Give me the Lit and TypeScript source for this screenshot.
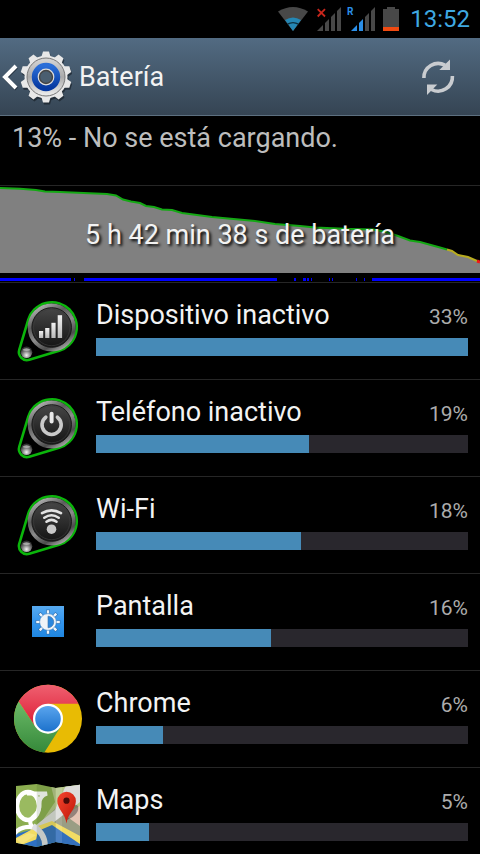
import { LitElement, html, css, svg, SVGTemplateResult } from "lit";
import { customElement, property } from "lit/decorators.js";

/** Shared metal knob with a green cable loop around it. */
const knob = (glyph: SVGTemplateResult) => svg`
  <defs>
    <linearGradient id="rim" x1="0.2" y1="0" x2="0.8" y2="1">
      <stop offset="0" stop-color="#b4b4b4"/><stop offset=".3" stop-color="#5c5c5c"/>
      <stop offset=".55" stop-color="#8c8c8c"/><stop offset=".8" stop-color="#4c4c4c"/>
      <stop offset="1" stop-color="#b0b0b0"/>
    </linearGradient>
    <linearGradient id="face" x1="0" y1="0" x2="0" y2="1">
      <stop offset="0" stop-color="#474747"/><stop offset="1" stop-color="#141414"/>
    </linearGradient>
    <radialGradient id="ball" cx=".5" cy=".75" r=".6">
      <stop offset="0" stop-color="#f4f4f4"/><stop offset=".45" stop-color="#999"/>
      <stop offset="1" stop-color="#333"/>
    </radialGradient>
    <linearGradient id="glyph" x1="0" y1="0" x2="0" y2="1">
      <stop offset="0" stop-color="#f2f2f2"/><stop offset="1" stop-color="#b8b8b8"/>
    </linearGradient>
  </defs>
  <path d="M28.2 36.9A24.8 24.8 0 1 1 59.1 67.8L29.3 76.7A8 8 0 0 1 19.3 66.7Z" fill="#000" stroke="#0bb50b" stroke-width="2.6"/>
  <circle cx="51.7" cy="44.5" r="21.800" fill="none" stroke="url(#rim)" stroke-width="4.4"/>
  <circle cx="51.7" cy="44.5" r="19.8" fill="url(#face)" stroke="#1c1c1c"/>
  <circle cx="51.7" cy="44.5" r="18.2" fill="none" stroke="#3c3c3c" stroke-width=".7"/>
  <circle cx="26.5" cy="69.3" r="5.8" fill="url(#ball)"/>
  <path d="M22.3 67a5 4 0 0 1 8.4 0q-4.200 2-8.400 0z" fill="#c8c8c8" opacity=".7"/>
  ${glyph}`;

const icons: Record<string, SVGTemplateResult> = {
  signal: knob(svg`<g fill="url(#glyph)">
    <rect x="39" y="48" width="4.200" height="7"/><rect x="45.200" y="45" width="4.200" height="10"/>
    <rect x="51.400" y="39.800" width="4.200" height="15.200"/><rect x="57.700" y="32.200" width="4.400" height="22.800"/></g>`),
  power: knob(svg`<g fill="none" stroke-linecap="round">
    <path d="M45.800 37.200A9.600 9.600 0 1 0 57.400 37.200" stroke="#c9c9c9" stroke-width="3.600"/>
    <path d="M51.600 33.700V41.500" stroke="#e9e9e9" stroke-width="4"/></g>`),
  wifi: knob(svg`<g fill="none" stroke="#e2e2e2" stroke-width="2.600" stroke-linecap="round">
    <path d="M42 36.200Q51.500 30.500 61 36.200"/><path d="M44.300 40.700Q51.500 35.800 58.700 40.700"/>
    <path d="M46.500 44.700Q51.500 41 56.500 44.700"/></g>
    <circle cx="51.500" cy="52.200" r="4.800" fill="#c8c8c8"/>`),
  display: svg`
    <defs><linearGradient id="tile" x1="0" y1="0" x2="0" y2="1">
      <stop offset="0" stop-color="#57aaf0"/><stop offset=".5" stop-color="#3596ee"/><stop offset="1" stop-color="#1f86e0"/>
    </linearGradient></defs>
    <rect x="32" y="32" width="32" height="31" fill="url(#tile)"/>
    <g stroke-linecap="square">
      ${[["#2a6cae", 3.6], ["#eef4fa", 2.4]].map(([c, w]) => svg`<g stroke=${c} stroke-width=${w}>
        ${[0, 45, 90, 135, 180, 225, 270, 315].map((a) => svg`<path d="M48 40V37.400" transform="rotate(${a} 48 48)"/>`)}
      </g>`)}
    </g>
    <circle cx="48" cy="48" r="8.400" fill="#f0f4f8" stroke="#2f7cc6" stroke-width=".6"/>
    <path d="M48 42.200a5.800 5.800 0 0 1 0 11.600z" fill="#2b86dc" stroke="#3b6ea4" stroke-width=".6"/>`,
  chrome: svg`
    <defs>
      <linearGradient id="red" x1="0" y1="0" x2="0" y2="1"><stop offset="0" stop-color="#ef6070"/><stop offset="1" stop-color="#dd1c35"/></linearGradient>
      <linearGradient id="green" x1="0" y1="0" x2="0" y2="1"><stop offset="0" stop-color="#6cba68"/><stop offset="1" stop-color="#35893a"/></linearGradient>
      <linearGradient id="blue" x1="0" y1="0" x2="0" y2="1"><stop offset="0" stop-color="#5aa5ee"/><stop offset="1" stop-color="#1d72cc"/></linearGradient>
    </defs>
    <circle cx="48" cy="47.700" r="34" fill="#e8bb04"/>
    <path d="M18.600 30.600A34 34 0 0 1 78.400 32.700H48L35 55.200Z" fill="url(#red)"/>
    <path d="M18.600 30.600A34 34 0 0 0 44.300 81.500L61 55.200L48 62.700L35 55.200Z" fill="url(#green)"/>
    <circle cx="48" cy="47.700" r="15" fill="#fff"/>
    <circle cx="48" cy="47.700" r="12.800" fill="url(#blue)"/>`,
  maps: svg`
    <defs>
      <clipPath id="sheet"><path d="M16 18L36.700 16L55.700 20L80 16.700V78L55.700 74L36.700 79L16 74.700Z"/></clipPath>
      <linearGradient id="pin" x1="0" y1="0" x2="1" y2="1"><stop offset="0" stop-color="#f5462f"/><stop offset="1" stop-color="#bd1406"/></linearGradient>
    </defs>
    <g clip-path="url(#sheet)">
      <rect x="16" y="14" width="64" height="66" fill="#8cae50"/>
      <path d="M50 14H80V40L57 52L36 62L55 34Z" fill="#b5c68a"/>
      <path d="M80 38L57 51L80 66Z" fill="#e5c5b4"/>
      <path d="M36 60L56 40L66 48L80 58V72L42 62Z" fill="#9a9d84"/>
      <path d="M67 15H80V34L36 68L30 62L55 42Z" fill="#dcdcda"/>
      <path d="M16 66L38 60L52 66L80 73V80H16Z" fill="#2e70c4"/>
      <path d="M38 58L52 53L80 68V77L56 64L16 79V70Z" fill="#f2dc63"/>
      <path d="M38 63L52 57L80 76V80H50L36 72Z" fill="#3470bc"/>
      <path d="M16 71L29 65L36 67L22 76Z" fill="#f6e47c"/>
      <g fill="none" stroke="#fff">
        <ellipse cx="28" cy="38" rx="11" ry="14" stroke-width="4.400" fill="#9aba60"/>
        <path d="M27 25.500H47Q39 28 39.500 36Q40 43 34 48Q27 54 33 59" stroke-width="4"/>
        <path d="M33 59Q20 58 14 66" stroke-width="4.400"/>
        <path d="M33 58Q46 66 45 80" stroke="#dedfe4" stroke-width="5.600"/>
      </g>
      <path d="M36.700 14L55.700 19V75L36.700 80Z" fill="#2d4a1c" opacity=".15"/>
      <path d="M55.700 18H62V76H55.700Z" fill="#fff" opacity=".12"/>
    </g>
    <path d="M67 52Q80 46 78 38Q74 34 69 42Z" fill="#333" opacity=".45"/>
    <path d="M66.500 55.500C65.500 46 57.300 41 57.300 33a9.300 9.300 0 0 1 18.600 0C75.900 41 67.500 46 66.500 55.500Z" fill="url(#pin)"/>
    <circle cx="66.500" cy="32.700" r="3.100" fill="#4b0b08"/>`,
};

@customElement("usage-row")
export class UsageRow extends LitElement {
  @property() name = "";
  @property() icon = "";
  @property({ type: Number }) percent = 0;
  /** Bar length in percent, relative to the largest consumer. */
  @property({ type: Number }) share = 100;

  static styles = css`
    :host { display: flex; height: 96px; border-bottom: 1px solid #262626; flex: none; }
    svg { display: block; }
    .icon { width: 96px; height: 96px; flex: none; }
    .body { flex: 1; min-width: 0; padding: 16px 12px 0 0; }
    .line { display: flex; justify-content: space-between; align-items: baseline; line-height: 32px; }
    .name { font-size: 27px; color: #f3f3f3; }
    .value { font-size: 21px; color: #acacac; }
    .track { height: 18px; margin-top: 5px; background: #29272d; }
    .fill { height: 18px; background: #468ab7; }
  `;

  render() {
    return html`
      <svg class="icon" viewBox="0 0 96 96" aria-hidden="true">${icons[this.icon]}</svg>
      <div class="body">
        <div class="line"><span class="name">${this.name}</span><span class="value">${this.percent}%</span></div>
        <div class="track" role="progressbar" aria-label=${this.name} aria-valuenow=${this.percent}>
          <div class="fill" style="width:${this.share}%"></div>
        </div>
      </div>`;
  }
}

/** Battery level over time: x and y of each sample. */
const levels = [
  [0, 2], [20, 2.7], [36, 4], [45, 5.5], [60, 6], [107, 8], [116, 9.5], [123, 13.5], [131, 15.5], [140, 17],
  [146, 20], [154, 21], [162, 23.5], [172, 24], [182, 27], [212, 31], [255, 35], [275, 38], [300, 40],
  [315, 41.5], [350, 43], [373, 43.5], [386, 46], [398, 50], [410, 54.5], [420, 56], [440, 61.5],
  [447, 63.5], [452, 65], [458, 69], [468, 71], [477, 75], [480, 76],
];
const points = (from: number, to: number) => levels.slice(from, to).map((p) => p.join(",")).join(" ");
const awake = [
  [0, 71], [74, 75], [84, 277], [294, 296], [303, 306], [307, 309], [311, 312], [329, 330], [332, 333],
  [356, 357], [364, 365], [372, 480],
];

const toothAngles = Array.from({ length: 10 }, (_, i) => i * 36);

const apps = [
  { name: "Dispositivo inactivo", icon: "signal", percent: 33, share: 100 },
  { name: "Teléfono inactivo", icon: "power", percent: 19, share: 57.2 },
  { name: "Wi-Fi", icon: "wifi", percent: 18, share: 55.1 },
  { name: "Pantalla", icon: "display", percent: 16, share: 47 },
  { name: "Chrome", icon: "chrome", percent: 6, share: 18 },
  { name: "Maps", icon: "maps", percent: 5, share: 14.2 },
];

@customElement("app-root")
export class AppRoot extends LitElement {
  static styles = css`
    :host {
      display: flex; flex-direction: column; height: 100vh; overflow: hidden;
      background: #000; color: #f3f3f3; font-family: Roboto, "Noto Sans", sans-serif;
    }
    button { border: 0; padding: 0; margin: 0; background: none; color: inherit; font: inherit; cursor: pointer; }
    svg { display: block; flex: none; }
    .status { display: flex; justify-content: flex-end; align-items: center; gap: 6px; height: 38px; padding-right: 10px; flex: none; }
    .clock { font-size: 24px; line-height: 38px; color: #3fa9e2; }
    .tag { font-size: 10px; font-weight: 700; fill: #2b8fe8; }
    .bar {
      display: flex; align-items: center; justify-content: space-between; height: 77px; flex: none;
      border-bottom: 1px solid #5d7080; background: linear-gradient(#526b82, #354453);
    }
    .back { display: flex; align-items: center; gap: 7px; }
    .title { margin: 0; font-size: 27px; line-height: 32px; font-weight: 400; }
    .refresh { width: 84px; height: 76px; display: grid; place-items: center; }
    .scroll { flex: 1; min-height: 0; overflow-y: auto; scrollbar-width: none; display: flex; flex-direction: column; }
    .charge { flex: none; height: 63px; margin: 0; padding: 6px 12px 0; font-size: 27px; line-height: 32px; color: #bdbdbd; border-bottom: 1px solid #262626; }
    .history { flex: none; display: grid; height: 96px; border-bottom: 1px solid #262626; }
    .chart { grid-area: 1 / 1; width: 100%; height: 96px; }
    .caption { grid-area: 1 / 1; z-index: 1; align-self: center; padding-top: 2px; text-align: center; font-size: 27px; line-height: 32px; text-shadow: 2px 2px 3px #000; }
  `;

  private bars(dx: number, active: number) {
    const on = "#2b8fe8", off = "#484848";
    return [
      "M0 24L6 18V24Z", "M8 24V16L12 12V24Z", "M14 24V10L18 6V24Z", "M20 24V4L24 0V24Z",
    ].map((d, i) => svg`<path d=${d} transform="translate(${dx} 0)" fill=${i < active ? on : off}/>`);
  }

  render() {
    return html`
      <div class="status">
        <svg width="33" height="24" viewBox="0 0 33 24" aria-hidden="true">
          <path d="M0 4.500Q15 -4.500 30 4.500L15 24Z" fill="#484848"/>
          <path d="M7 13Q15 8 23 13L15 24Z" fill="#2587b4"/>
          <path d="M9.500 17.200Q15 14 20.500 17.200" fill="none" stroke="#0c3040" stroke-width="1.400"/>
        </svg>
        <svg width="24" height="24" viewBox="0 0 24 24" aria-hidden="true">
          ${this.bars(0, 0)}
          <path d="M.700 2.200L8 9.500M8 2.200L.700 9.500" stroke="#c8261c" stroke-width="1.800"/>
        </svg>
        <svg width="30" height="24" viewBox="0 0 30 24" overflow="visible" aria-hidden="true">
          ${this.bars(4, 2)}
          <text class="tag" x="0" y="8">R</text>
        </svg>
        <svg width="21" height="24" viewBox="0 0 21 24" aria-hidden="true">
          <path d="M4 0H12V2H16V24H0V2H4Z" fill="#484848"/><rect y="20" width="16" height="4" fill="#f04a12"/>
        </svg>
        <time class="clock">13:52</time>
      </div>

      <header class="bar">
        <button class="back" aria-label="Atrás">
          <svg width="72" height="56" viewBox="0 0 72 56" aria-hidden="true">
            <defs>
              <linearGradient id="silver" x1="0" y1="0" x2="0" y2="1">
                <stop offset="0" stop-color="#d8d8d8"/><stop offset=".5" stop-color="#aaa"/><stop offset="1" stop-color="#f0f0f0"/>
              </linearGradient>
              <linearGradient id="core" x1="0" y1="0" x2="0" y2="1">
                <stop offset="0" stop-color="#2a6ed8"/><stop offset="1" stop-color="#0538a0"/>
              </linearGradient>
            </defs>
            <path d="M16.500 18L5.500 29L16.500 40" fill="none" stroke="#17202a" stroke-width="4" opacity=".6"/>
            <path d="M16 17L5 28L16 39" fill="none" stroke="#fff" stroke-width="4"/>
            <g transform="translate(1 2)" fill="#10161c" opacity=".55">
              <circle cx="46" cy="28" r="21.500"/>
              ${toothAngles.map((a) => svg`<path d="M41 9L43 2.500H49L51 9Z" transform="rotate(${a} 46 28)"/>`)}
            </g>
            <g fill="#e8e8e8">
              <circle cx="46" cy="28" r="21.500"/>
              ${toothAngles.map((a) => svg`<path d="M41 9L43 2.500H49L51 9Z" transform="rotate(${a} 46 28)"/>`)}
            </g>
            <circle cx="46" cy="28" r="19" fill="url(#silver)" stroke="#777" stroke-width="1"/>
            <circle cx="46" cy="28" r="11" fill="none" stroke="url(#core)" stroke-width="6.400"/>
            <circle cx="46" cy="28" r="8.400" fill="#ddd"/>
            <circle cx="46" cy="28" r="6.500" fill="#4a5e70" stroke="#444" stroke-width="1.400"/>
          </svg>
          <h1 class="title">Batería</h1>
        </button>
        <button class="refresh" aria-label="Actualizar">
          <svg width="36" height="38" viewBox="420 58 36 38" aria-hidden="true">
            <g fill="none" stroke="#c9ccd0" stroke-width="3.600">
              <path d="M423.900 78A14.300 14.300 0 0 1 445 65.200"/><path d="M452.400 76A14.300 14.300 0 0 1 431.500 89.500"/>
            </g>
            <path d="M450 59.500V70H439.300ZM427 84.500H437.300L427 95Z" fill="#c9ccd0"/>
          </svg>
        </button>
      </header>

      <main class="scroll">
        <p class="charge">13% - No se está cargando.</p>
        <section class="history">
          <svg class="chart" viewBox="0 0 480 96" preserveAspectRatio="none" aria-hidden="true">
            <polygon points="0,87 ${points(0, levels.length)} 480,87" fill="#808080"/>
            <g fill="none" stroke-width="2">
              <polyline points=${points(0, 28)} stroke="#14a814"/>
              <polyline points=${points(27, 32)} stroke="#b8ac20"/>
              <polyline points=${points(31, 33)} stroke="#f01818" stroke-width="3"/>
            </g>
            ${awake.map(([a, b]) => svg`<rect x=${a} y="92" width=${b - a} height="3" fill="#0000fe"/>`)}
          </svg>
          <span class="caption">5 h 42 min 38 s de batería</span>
        </section>
        ${apps.map((a) => html`<usage-row name=${a.name} icon=${a.icon} .percent=${a.percent} .share=${a.share}></usage-row>`)}
      </main>`;
  }
}
